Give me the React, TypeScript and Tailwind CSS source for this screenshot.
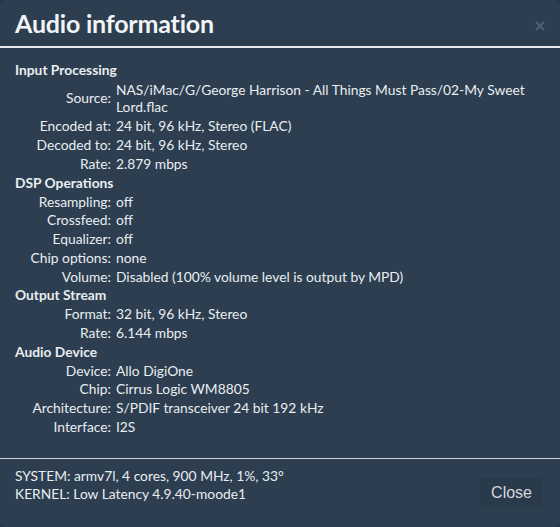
import React from 'react';

type Row = { label: string; value: string };
type Section = { title: string; rows: Row[] };

const sections: Section[] = [
	{
		title: 'Input Processing',
		rows: [
			{ label: 'Source', value: 'NAS/iMac/G/George Harrison - All Things Must Pass/02-My Sweet Lord.flac' },
			{ label: 'Encoded at', value: '24 bit, 96 kHz, Stereo (FLAC)' },
			{ label: 'Decoded to', value: '24 bit, 96 kHz, Stereo' },
			{ label: 'Rate', value: '2.879 mbps' },
		],
	},
	{
		title: 'DSP Operations',
		rows: [
			{ label: 'Resampling', value: 'off' },
			{ label: 'Crossfeed', value: 'off' },
			{ label: 'Equalizer', value: 'off' },
			{ label: 'Chip options', value: 'none' },
			{ label: 'Volume', value: 'Disabled (100% volume level is output by MPD)' },
		],
	},
	{
		title: 'Output Stream',
		rows: [
			{ label: 'Format', value: '32 bit, 96 kHz, Stereo' },
			{ label: 'Rate', value: '6.144 mbps' },
		],
	},
	{
		title: 'Audio Device',
		rows: [
			{ label: 'Device', value: 'Allo DigiOne' },
			{ label: 'Chip', value: 'Cirrus Logic WM8805' },
			{ label: 'Architecture', value: 'S/PDIF transceiver 24 bit 192 kHz' },
			{ label: 'Interface', value: 'I2S' },
		],
	},
];

const App = () => {
	return (
		<div className="h-[527px] w-[560px] bg-[#263646] font-['Lato',sans-serif] text-[#e9edf0]">
			<div className="flex h-full w-full flex-col rounded-[5px] bg-[#2c3e50]">
				{/* header */}
				<div className="relative flex h-[48px] items-center border-b-2 border-[#e8ecef] px-[15px] pt-[1px]">
					<h1 className="text-[25px] leading-none font-bold tracking-[-0.2px] text-[#f2f4f5]">Audio information</h1>
					<svg className="absolute top-[21px] right-[15px]" width="10" height="10" viewBox="0 0 10 10">
						<path d="M1 1 L9 9 M9 1 L1 9" stroke="#4f6072" strokeWidth="2" />
					</svg>
				</div>

				{/* body */}
				<div className="flex-1 px-[15px] pt-[12.5px] text-[13.8px] leading-[16px]">
					<div className="grid grid-cols-[96px_1fr] gap-x-[5px]">
						{sections.map(section => (
							<React.Fragment key={section.title}>
								<div className="col-span-2 py-[1.4px] font-bold">{section.title}</div>
								{section.rows.map((row, i) => (
									<React.Fragment key={`${section.title}-${i}`}>
										<div className="self-center py-[1.4px] text-right whitespace-nowrap">{row.label}:</div>
										<div
											className={
												row.label === 'Source'
													? 'self-center py-[1.4px] pr-[10px] leading-[17.5px]'
													: 'self-center py-[1.4px] pr-[10px]'
											}
										>
											{row.value}
										</div>
									</React.Fragment>
								))}
							</React.Fragment>
						))}
					</div>
				</div>

				{/* footer */}
				<div className="flex h-[69px] items-start justify-between border-t border-[#c9d0d6] pt-[8px] pr-[17px] pl-[15px] text-[13.8px] leading-[18px]">
					<div>
						<div>SYSTEM: armv7l, 4 cores, 900 MHz, 1%, 33°</div>
						<div>KERNEL: Low Latency 4.9.40-moode1</div>
					</div>
					<button className="mt-[11px] h-[29px] rounded-[2px] bg-[#293a4b] px-[11px] font-['Liberation_Sans',sans-serif] text-[16px] text-[#d4d8dc]">
						Close
					</button>
				</div>
			</div>
		</div>
	);
};

export default App;
